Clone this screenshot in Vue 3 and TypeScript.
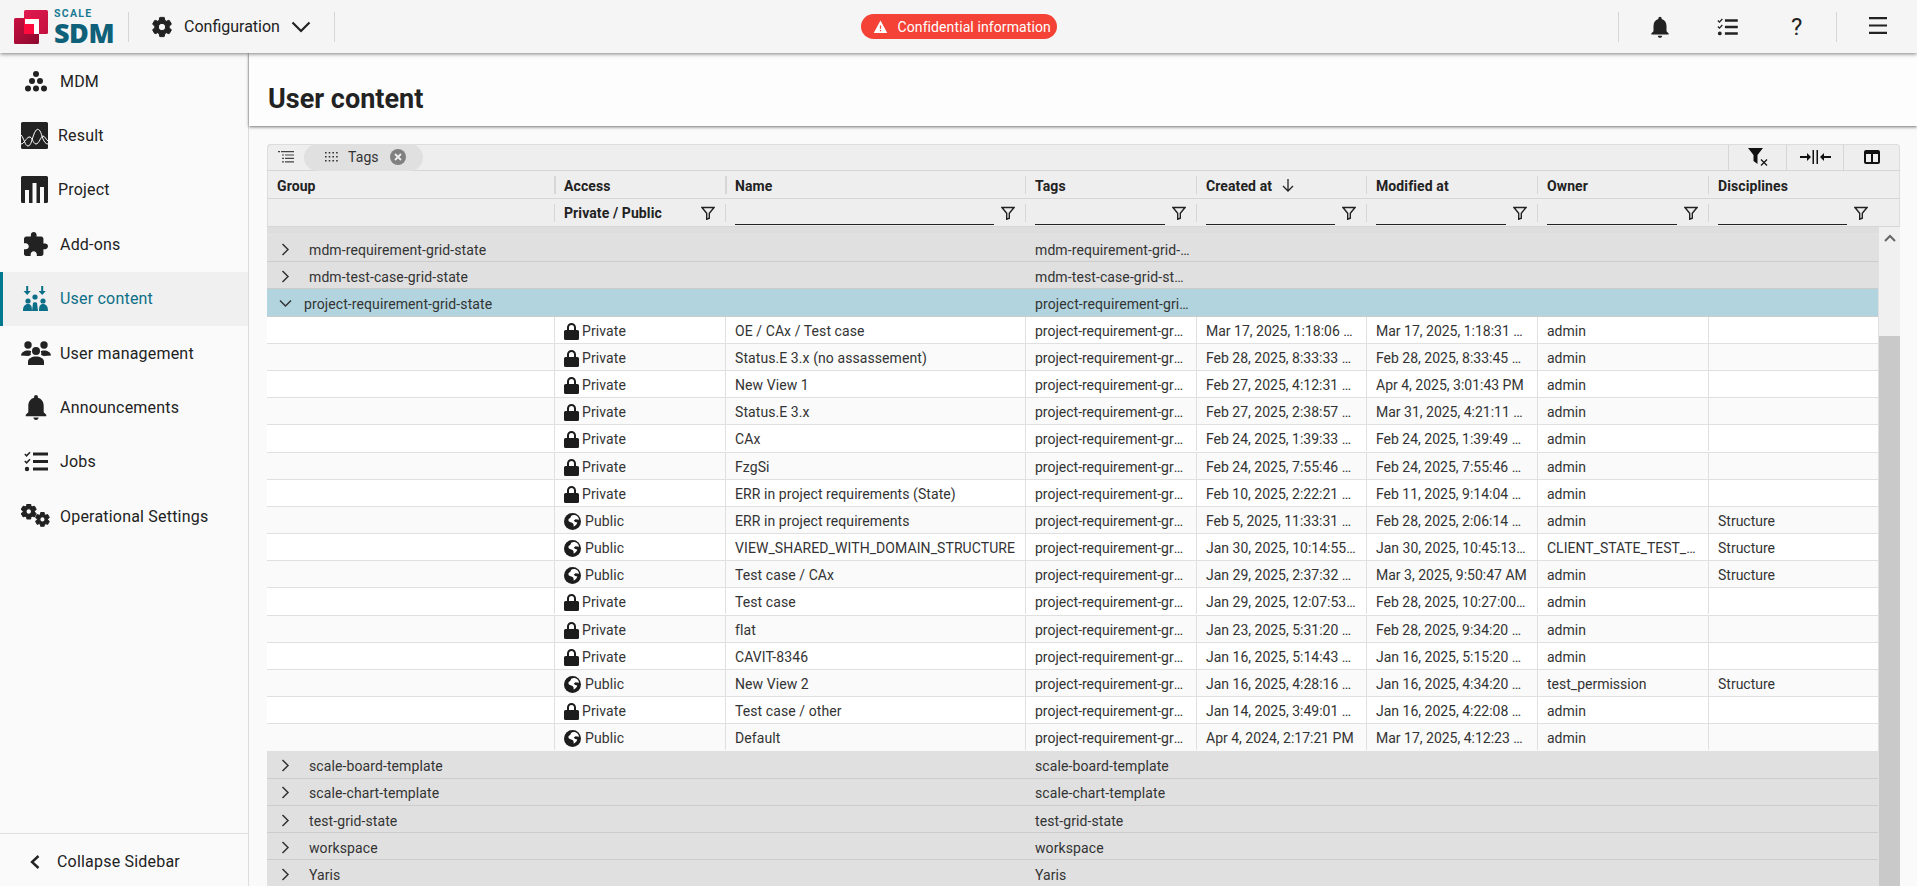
<script setup lang="ts">
interface Shape { d?: string; c?: number[]; fill?: string; stroke?: string; sw?: number; t?: string }
interface NavItem { label: string; vb: string; w: number; h: number; pad: number; slot: number; shapes: Shape[]; active?: boolean }
interface Row { acc: 'Private' | 'Public'; name: string; created: string; modified: string; owner: string; disc: string }

const gear = 'M19.14 12.94c.04-.3.06-.61.06-.94 0-.32-.02-.64-.07-.94l2.03-1.58c.18-.14.23-.41.12-.61l-1.92-3.32c-.12-.22-.37-.29-.59-.22l-2.39.96c-.5-.38-1.03-.7-1.62-.94l-.36-2.54c-.04-.24-.24-.41-.48-.41h-3.84c-.24 0-.43.17-.47.41l-.36 2.54c-.59.24-1.13.57-1.62.94l-2.39-.96c-.22-.08-.47 0-.59.22L2.74 8.87c-.12.21-.08.47.12.61l2.03 1.58c-.05.3-.09.63-.09.94s.02.64.07.94l-2.03 1.58c-.18.14-.23.41-.12.61l1.92 3.32c.12.22.37.29.59.22l2.39-.96c.5.38 1.03.7 1.62.94l.36 2.54c.05.24.24.41.48.41h3.84c.24 0 .44-.17.47-.41l.36-2.54c.59-.24 1.13-.56 1.62-.94l2.39.96c.22.08.47 0 .59-.22l1.92-3.32c.12-.22.07-.47-.12-.61l-2.01-1.58zM12 15.6c-1.98 0-3.6-1.62-3.6-3.6s1.62-3.6 3.6-3.6 3.6 1.62 3.6 3.6-1.62 3.6-3.6 3.6z'
const bell = 'M12 22c1.1 0 2-.9 2-2h-4c0 1.1.89 2 2 2zm6-6v-5c0-3.07-1.64-5.64-4.5-6.32V4c0-.83-.67-1.5-1.5-1.5s-1.5.67-1.5 1.5v.68C7.63 5.36 6 7.92 6 11v5l-2 2v1h16v-1l-2-2z'
const checklist: Shape[] = [
  { d: 'M.8 3l1.8 1.8L6 1.2', stroke: 'currentColor', sw: 1.5, fill: 'none' },
  { d: 'M.8 10l1.8 1.8L6 8.2', stroke: 'currentColor', sw: 1.5, fill: 'none' },
  { c: [3, 18, 2.2] },
  { d: 'M9 1.5h15v3H9zM9 9h15v3H9zM9 16.5h15v3H9z' },
]

const nav: NavItem[] = [
  { label: 'MDM', vb: '0 0 22 21', w: 22, h: 21, pad: 4, slot: 35, shapes: [
    { c: [11, 3, 3] }, { c: [7, 10, 3] }, { c: [15, 10, 3] }, { c: [3, 17.5, 3] }, { c: [11, 17.5, 3] }, { c: [19, 17.5, 3] },
  ] },
  { label: 'Result', vb: '0 0 27 27', w: 27, h: 27, pad: 0, slot: 37, shapes: [
    { d: 'M1.5 0h24A1.5 1.5 0 0 1 27 1.5v24a1.5 1.5 0 0 1-1.5 1.5h-24A1.5 1.5 0 0 1 0 25.5v-24A1.5 1.5 0 0 1 1.5 0z' },
    { d: 'M0 13c3 3 4 11 7 11s4-7 6-12 4-6 6-3 3 13 8 13', stroke: '#fff', sw: 1, fill: 'none' },
    { d: 'M0 22c3 0 5-6 8-7s4 7 7 7 5-8 7-8 3 4 5 5', stroke: '#fff', sw: 1, fill: 'none' },
  ] },
  { label: 'Project', vb: '0 0 27 27', w: 27, h: 27, pad: 0, slot: 37, shapes: [
    { d: 'M1.5 0h24A1.5 1.5 0 0 1 27 1.5v24a1.5 1.5 0 0 1-1.5 1.5h-24A1.5 1.5 0 0 1 0 25.5v-24A1.5 1.5 0 0 1 1.5 0zM4 14v13h4V14zM11.5 7v20h4V7zM19 11v16h4V11z' },
  ] },
  { label: 'Add-ons', vb: '2 1 21 21', w: 24, h: 24, pad: 3, slot: 36, shapes: [
    { d: 'M20.5 11H19V7c0-1.1-.9-2-2-2h-4V3.5C13 2.12 11.88 1 10.5 1S8 2.12 8 3.5V5H4c-1.1 0-1.99.9-1.99 2v3.8H3.5c1.49 0 2.7 1.21 2.7 2.7s-1.21 2.7-2.7 2.7H2V20c0 1.1.9 2 2 2h3.8v-1.5c0-1.49 1.21-2.7 2.7-2.7 1.49 0 2.7 1.21 2.7 2.7V22H17c1.1 0 2-.9 2-2v-4h1.5c1.38 0 2.5-1.12 2.5-2.5S21.88 11 20.5 11z' },
  ] },
  { label: 'User content', vb: '0 0 25 25', w: 25, h: 25, pad: 0, slot: 37, active: true, shapes: [
    { d: 'M3.2 0h2v5h2.6L4.2 9 .6 5h2.6zM18.2 0h2v5h2.6l-3.6 4-3.6-4h2.6z' },
    { c: [12, 11, 2.6] }, { c: [5, 15, 2.6] }, { c: [20, 15, 2.6] },
    { d: 'M9 25l1-8c.4-1 3.6-1 4 0l1 8zM0 25c0-5 2-7 5-7s4 2 4 7zM16 25c0-5 1-7 4-7s5 2 5 7z' },
  ] },
  { label: 'User management', vb: '0 0 30 24', w: 30, h: 24, pad: 0, slot: 39, shapes: [
    { c: [7, 4, 3.7] }, { c: [23, 4, 3.7] }, { c: [15, 10, 4] },
    { d: 'M0 14.5c0-3 3.5-5 7-5 1.6 0 2.6.3 3.3.8-.6 1-.8 2.2-.4 3.7-.9.2-1.8.5-2.5 1zM30 14.5c0-3-3.5-5-7-5-1.6 0-2.6.3-3.3.8.6 1 .8 2.2.4 3.7.9.2 1.8.5 2.5 1zM7 24v-3.5c0-3 4-5 8-5s8 2 8 5V24z' },
  ] },
  { label: 'Announcements', vb: '4 2.5 16 19.5', w: 22, h: 25, pad: 4, slot: 35, shapes: [{ d: bell }] },
  { label: 'Jobs', vb: '0 0 24 21', w: 24, h: 21, pad: 3, slot: 36, shapes: checklist },
  { label: 'Operational Settings', vb: '0 0 30 24', w: 30, h: 24, pad: 0, slot: 39, shapes: [
    { d: gear, t: 'translate(-1.6 -1.8) scale(.78)', stroke: 'currentColor', sw: 1.4 },
    { d: gear, t: 'translate(12.8 6.8) scale(.72)', stroke: 'currentColor', sw: 1.4 },
  ] },
]

const headers = ['Group', 'Access', 'Name', 'Tags', 'Created at', 'Modified at', 'Owner', 'Disciplines']
const tag = 'project-requirement-grid-state'
const rows: Row[] = [
  { acc: 'Private', name: 'OE / CAx / Test case', created: 'Mar 17, 2025, 1:18:06 PM', modified: 'Mar 17, 2025, 1:18:31 PM', owner: 'admin', disc: '' },
  { acc: 'Private', name: 'Status.E 3.x (no assassement)', created: 'Feb 28, 2025, 8:33:33 AM', modified: 'Feb 28, 2025, 8:33:45 AM', owner: 'admin', disc: '' },
  { acc: 'Private', name: 'New View 1', created: 'Feb 27, 2025, 4:12:31 PM', modified: 'Apr 4, 2025, 3:01:43 PM', owner: 'admin', disc: '' },
  { acc: 'Private', name: 'Status.E 3.x', created: 'Feb 27, 2025, 2:38:57 PM', modified: 'Mar 31, 2025, 4:21:11 PM', owner: 'admin', disc: '' },
  { acc: 'Private', name: 'CAx', created: 'Feb 24, 2025, 1:39:33 PM', modified: 'Feb 24, 2025, 1:39:49 PM', owner: 'admin', disc: '' },
  { acc: 'Private', name: 'FzgSi', created: 'Feb 24, 2025, 7:55:46 AM', modified: 'Feb 24, 2025, 7:55:46 AM', owner: 'admin', disc: '' },
  { acc: 'Private', name: 'ERR in project requirements (State)', created: 'Feb 10, 2025, 2:22:21 PM', modified: 'Feb 11, 2025, 9:14:04 AM', owner: 'admin', disc: '' },
  { acc: 'Public', name: 'ERR in project requirements', created: 'Feb 5, 2025, 11:33:31 AM', modified: 'Feb 28, 2025, 2:06:14 PM', owner: 'admin', disc: 'Structure' },
  { acc: 'Public', name: 'VIEW_SHARED_WITH_DOMAIN_STRUCTURE', created: 'Jan 30, 2025, 10:14:55 AM', modified: 'Jan 30, 2025, 10:45:13 AM', owner: 'CLIENT_STATE_TEST_USER', disc: 'Structure' },
  { acc: 'Public', name: 'Test case / CAx', created: 'Jan 29, 2025, 2:37:32 PM', modified: 'Mar 3, 2025, 9:50:47 AM', owner: 'admin', disc: 'Structure' },
  { acc: 'Private', name: 'Test case', created: 'Jan 29, 2025, 12:07:53 PM', modified: 'Feb 28, 2025, 10:27:00 AM', owner: 'admin', disc: '' },
  { acc: 'Private', name: 'flat', created: 'Jan 23, 2025, 5:31:20 PM', modified: 'Feb 28, 2025, 9:34:20 AM', owner: 'admin', disc: '' },
  { acc: 'Private', name: 'CAVIT-8346', created: 'Jan 16, 2025, 5:14:43 PM', modified: 'Jan 16, 2025, 5:15:20 PM', owner: 'admin', disc: '' },
  { acc: 'Public', name: 'New View 2', created: 'Jan 16, 2025, 4:28:16 PM', modified: 'Jan 16, 2025, 4:34:20 PM', owner: 'test_permission', disc: 'Structure' },
  { acc: 'Private', name: 'Test case / other', created: 'Jan 14, 2025, 3:49:01 PM', modified: 'Jan 16, 2025, 4:22:08 PM', owner: 'admin', disc: '' },
  { acc: 'Public', name: 'Default', created: 'Apr 4, 2024, 2:17:21 PM', modified: 'Mar 17, 2025, 4:12:23 PM', owner: 'admin', disc: '' },
]
const groupsBefore = ['mdm-requirement-grid-state', 'mdm-test-case-grid-state']
const groupsAfter = ['scale-board-template', 'scale-chart-template', 'test-grid-state', 'workspace', 'Yaris']
</script>

<template>
  <div class="app">
    <header class="top">
      <div class="logo">
        <svg class="logo-mark" width="34" height="34" viewBox="0 0 34 34">
          <defs>
            <linearGradient id="lr" x1="0" y1="0" x2="1" y2="1">
              <stop offset="0" stop-color="#e01a4f" />
              <stop offset="1" stop-color="#c2103f" />
            </linearGradient>
            <linearGradient id="ld" x1="0" y1="0" x2="1" y2="1">
              <stop offset="0" stop-color="#c81040" />
              <stop offset="1" stop-color="#8c0a2e" />
            </linearGradient>
          </defs>
          <rect x="10" y="0" width="24" height="24" rx="1.5" fill="url(#lr)" />
          <rect x="0" y="8" width="25" height="26" rx="1.5" fill="url(#ld)" />
          <rect x="10" y="8" width="15" height="16" fill="#ff0a3c" />
          <path d="M11 9h14v15h-5V14h-9z" fill="#fff" />
        </svg>
        <div class="logo-text">
          <span class="logo-scale">SCALE</span>
          <span class="logo-sdm">SDM</span>
        </div>
      </div>
      <span class="vline"></span>
      <div class="config">
        <svg width="24" height="24" viewBox="0 0 24 24" fill="#222" stroke="#222" stroke-width="1"><path :d="gear" /></svg>
        <span class="config-label">Configuration</span>
        <svg width="20" height="12" viewBox="0 0 20 12" fill="none" stroke="#222" stroke-width="2.2"><path d="M1.5 1.5l8.5 8.500 8.500-8.500" /></svg>
      </div>
      <span class="vline"></span>
      <div class="top-mid">
        <div class="badge">
          <svg width="15" height="13" viewBox="0 0 24 21" fill="#fff"><path d="M1 21h22L12 1 1 21zm12-3h-2v-2h2v2zm0-4h-2v-5h2v5z" /></svg>
          <span>Confidential information</span>
        </div>
      </div>
      <span class="vline"></span>
      <div class="top-icons">
        <svg width="26" height="26" viewBox="0 0 24 24" fill="#222"><path :d="bell" /></svg>
        <svg class="top-check" width="21" height="18" viewBox="0 0 24 21" fill="#222" color="#222">
          <template v-for="(s, i) in checklist" :key="i">
            <circle v-if="s.c" :cx="s.c[0]" :cy="s.c[1]" :r="s.c[2]" />
            <path v-else :d="s.d" :fill="s.fill" :stroke="s.stroke" :stroke-width="s.sw" />
          </template>
        </svg>
        <span class="help">?</span>
      </div>
      <span class="vline"></span>
      <div class="burger">
        <svg width="18" height="17" viewBox="0 0 18 17" fill="#222"><path d="M0 0h18v2.2H0zM0 7.4h18v2.2H0zM0 14.8h18V17H0z" /></svg>
      </div>
    </header>

    <div class="body">
      <aside class="side">
        <nav class="nav">
          <a v-for="n in nav" :key="n.label" class="nav-item" :class="{ active: n.active }">
            <span class="nav-icon" :style="{ width: n.slot + 'px', marginLeft: n.pad + 'px' }">
              <svg :width="n.w" :height="n.h" :viewBox="n.vb" fill="currentColor">
                <template v-for="(s, i) in n.shapes" :key="i">
                  <circle v-if="s.c" :cx="s.c[0]" :cy="s.c[1]" :r="s.c[2]" />
                  <path v-else :d="s.d" :fill="s.fill" :stroke="s.stroke" :stroke-width="s.sw" :transform="s.t" :fill-rule="n.label === 'Project' ? 'evenodd' : undefined" />
                </template>
              </svg>
            </span>
            <span>{{ n.label }}</span>
          </a>
        </nav>
        <div class="collapse">
          <svg width="12" height="16" viewBox="0 0 12 16" fill="none" stroke="#222" stroke-width="2.4"><path d="M9.5 2L3 8l6.500 6" /></svg>
          <span>Collapse Sidebar</span>
        </div>
      </aside>

      <main class="main">
        <div class="title-bar"><h1>User content</h1></div>
        <section class="grid">
          <div class="toolbar">
            <svg class="tb-tree" width="16" height="12" viewBox="0 0 16 12" fill="#444"><path d="M0 0h2v1.2H0zM3 0h13v1.2H3zM4 3.4h2v1.2H4zM7 3.4h9v1.2H7zM4 6.800h2V8H4zM7 6.800h9V8H7zM4 10.3h2v1.2H4zM7 10.3h9v1.2H7z" /></svg>
            <div class="chip">
              <svg width="13" height="10" viewBox="0 0 13 10" fill="#333"><path d="M0 0h1.6v1.6H0zM3.7 0h1.6v1.6H3.7zM7.4 0H9v1.6H7.4zM11.1 0h1.6v1.6h-1.6zM0 4h1.6v1.6H0zM3.7 4h1.6v1.6H3.7zM7.4 4H9v1.6H7.4zM11.1 4h1.6v1.6h-1.6zM0 8h1.6v1.6H0zM3.7 8h1.6v1.6H3.7zM7.4 8H9v1.6H7.4zM11.1 8h1.6v1.6h-1.6z" /></svg>
              <span class="chip-label">Tags</span>
              <svg width="16" height="16" viewBox="0 0 16 16"><circle cx="8" cy="8" r="8" fill="#808080" /><path d="M5 5l6 6M11 5l-6 6" stroke="#eee" stroke-width="1.8" /></svg>
            </div>
            <div class="tb-right">
              <span class="tb-btn">
                <svg width="20" height="18" viewBox="0 0 20 18"><path d="M0 0h15L9.5 7v9l-4-3V7z" fill="#111" /><path d="M13 11.5l6 6M19 11.5l-6 6" stroke="#111" stroke-width="1.2" /></svg>
              </span>
              <span class="tb-btn">
                <svg width="31" height="14" viewBox="0 0 31 14" fill="#111"><path d="M0 6h7V3l4 4-4 4V8H0zM12.5 0H14v14h-1.5zM16.5 0H18v14h-1.5zM31 6h-7V3l-4 4 4 4V8h7z" /></svg>
              </span>
              <span class="tb-btn">
                <svg width="16" height="14" viewBox="0 0 16 14" fill="none" stroke="#111" stroke-width="2"><rect x="1" y="1" width="14" height="12" rx="1" /><path d="M8 1v12M1 3h14" /></svg>
              </span>
            </div>
          </div>

          <div class="head cols">
            <div v-for="(h, i) in headers" :key="h" class="hcell" :class="{ first: i === 0, thick: i < 3 }">
              <span>{{ h }}</span>
              <svg v-if="h === 'Created at'" class="sort" width="12" height="13" viewBox="0 0 12 13" fill="none" stroke="#222" stroke-width="1.3"><path d="M6 0v12M1 7l5 5 5-5" /></svg>
            </div>
          </div>

          <div class="filters cols">
            <div class="fcell first"></div>
            <div class="fcell">
              <b class="priv">Private / Public</b>
              <svg class="funnel" width="14" height="14" viewBox="0 0 14 14" fill="none" stroke="#222" stroke-width="1.4"><path d="M1 1.5h12L8.3 7.2v5L5.7 13.2V7.2z" /></svg>
            </div>
            <div v-for="h in headers.slice(2)" :key="h" class="fcell">
              <span class="finput"></span>
              <svg class="funnel" width="14" height="14" viewBox="0 0 14 14" fill="none" stroke="#222" stroke-width="1.4"><path d="M1 1.5h12L8.3 7.2v5L5.7 13.2V7.2z" /></svg>
            </div>
          </div>

          <div class="scroller">
            <div class="rows">
              <div class="band"></div>
              <div v-for="g in groupsBefore" :key="g" class="grow cols">
                <div class="gname">
                  <svg class="chev" width="9" height="13" viewBox="0 0 9 13" fill="none" stroke="#333" stroke-width="1.5"><path d="M1.5 1L7 6.5 1.5 12" /></svg>
                  <span class="gtext">{{ g }}</span>
                </div>
                <div class="gtag">{{ g }}</div>
              </div>
              <div class="grow sel cols">
                <div class="gname">
                  <svg class="chev-down" width="13" height="9" viewBox="0 0 13 9" fill="none" stroke="#333" stroke-width="1.5"><path d="M1 1.5L6.5 7 12 1.5" /></svg>
                  <span class="gtext">{{ tag }}</span>
                </div>
                <div class="gtag">{{ tag }}</div>
              </div>
              <div v-for="r in rows" :key="r.name + r.created" class="drow cols">
                <div class="dcell"></div>
                <div class="dcell acc">
                  <svg v-if="r.acc === 'Private'" width="15" height="17" viewBox="0 0 15 17" fill="#1c1c1c"><path d="M1.5 7H3V4.5a4.5 4.5 0 0 1 9 0V7h1.5A1.5 1.5 0 0 1 15 8.5v7a1.5 1.5 0 0 1-1.5 1.5h-12A1.5 1.5 0 0 1 0 15.5v-7A1.5 1.5 0 0 1 1.5 7zM5 7h5V4.5a2.5 2.5 0 0 0-5 0z" /></svg>
                  <svg v-else class="globe" width="17" height="17" viewBox="0 0 17 17"><circle cx="8.5" cy="8.5" r="8.5" fill="#1c1c1c" /><path d="M7 3c2-1.5 5-1.2 6.8.8.8 1 1.200 2 1.200 3l-3.500-.5-1.800 1.400 1.600 1.200 2 .6c-.5 2-2 3.500-3.800 4 .6-2-.2-3.500-2.200-4S4 8 4.500 6.500 6.500 6 7 3z" fill="#fff" /></svg>
                  <span>{{ r.acc }}</span>
                </div>
                <div class="dcell txt">{{ r.name }}</div>
                <div class="dcell txt">{{ tag }}</div>
                <div class="dcell txt">{{ r.created }}</div>
                <div class="dcell txt">{{ r.modified }}</div>
                <div class="dcell txt">{{ r.owner }}</div>
                <div class="dcell txt">{{ r.disc }}</div>
              </div>
              <div v-for="g in groupsAfter" :key="g" class="grow cols">
                <div class="gname">
                  <svg class="chev" width="9" height="13" viewBox="0 0 9 13" fill="none" stroke="#333" stroke-width="1.5"><path d="M1.5 1L7 6.5 1.5 12" /></svg>
                  <span class="gtext">{{ g }}</span>
                </div>
                <div class="gtag">{{ g }}</div>
              </div>
            </div>
            <div class="sbar">
              <div class="sbar-up">
                <svg width="12" height="8" viewBox="0 0 12 8" fill="none" stroke="#666" stroke-width="2"><path d="M1 7l5-5 5 5" /></svg>
              </div>
              <div class="sbar-thumb"></div>
            </div>
          </div>
        </section>
      </main>
    </div>
  </div>
</template>

<style>
html, body { margin: 0; background: #fafafa; overflow: hidden; }
</style>

<style scoped>
.app { width: 1917px; height: 886px; display: flex; flex-direction: column; overflow: hidden; font-family: Roboto, "Liberation Sans", sans-serif; color: #222; font-size: 14px; letter-spacing: .1px; }
.top { height: 53px; flex: none; display: flex; align-items: center; background: #f5f5f5; box-shadow: 0 1px 4px rgba(0,0,0,.5); position: relative; z-index: 3; }
.logo { width: 128px; padding-left: 14px; box-sizing: border-box; display: flex; gap: 6px; align-items: center; }
.logo-text { display: flex; flex-direction: column; color: #0f6079; line-height: 1; }
.logo-scale { font-size: 10.5px; font-weight: 700; letter-spacing: 1.3px; color: #1a7a94; height: 12px; }
.logo-sdm { font-family: "Open Sans", sans-serif; font-size: 27px; font-weight: 800; height: 24px; line-height: 23px; letter-spacing: -.5px; }
.vline { width: 1px; height: 30px; background: #d6d6d6; flex: none; }
.config { width: 205px; box-sizing: border-box; padding-left: 21px; display: flex; align-items: center; }
.config-label { margin: 0 11px 0 10px; font-size: 16px; letter-spacing: 0; }
.top-mid { flex: 1; display: flex; justify-content: center; }
.badge { width: 196px; height: 25px; margin-left: -36px; box-sizing: border-box; background: #f44336; color: #fff; border-radius: 13px; display: flex; align-items: center; padding-left: 12px; gap: 10px; font-size: 14px; }
.top-icons { width: 217px; display: flex; align-items: center; padding-left: 28px; box-sizing: border-box; }
.top-check { margin-left: 44px; }
.help { font-size: 24px; font-weight: 400; line-height: 24px; margin-left: 53px; color: #222; }
.burger { width: 80px; flex: none; display: flex; justify-content: center; padding: 0 0 3px 2px; box-sizing: border-box; }
.body { flex: 1; display: flex; min-height: 0; }
.side { width: 249px; flex: none; box-sizing: border-box; border-right: 1px solid #ddd; background: #fafafa; display: flex; flex-direction: column; }
.nav { flex: 1; padding-top: 1px; }
.nav-item { height: 54.4px; display: flex; align-items: center; padding-left: 21px; font-size: 16px; box-sizing: border-box; color: #222; letter-spacing: .2px; }
.nav-item.active { background: #f0f0f0; border-left: 3px solid #00788f; padding-left: 20px; color: #0c6f88; }
.nav-icon { display: flex; align-items: center; flex: none; }
.collapse { height: 53px; border-top: 1px solid #e0e0e0; box-sizing: border-box; display: flex; align-items: center; padding: 3px 0 0 29px; gap: 16px; font-size: 16px; letter-spacing: .2px; }
.main { flex: 1; min-width: 0; background: #fafafa; display: flex; flex-direction: column; }
.title-bar { height: 73px; flex: none; box-sizing: border-box; background: #fdfdfd; box-shadow: 0 1px 3px rgba(0,0,0,.55); display: flex; align-items: center; padding: 18px 0 0 19px; position: relative; z-index: 1; }
h1 { margin: 0; font-size: 27px; font-weight: 700; color: #222; letter-spacing: 0; }
.grid { margin: 18px 17px 0 18px; flex: 1; min-height: 0; display: flex; flex-direction: column; background: #eee; border-radius: 4px 4px 0 0; box-shadow: inset 1px 1px 0 #ddd, inset -1px 0 0 #ddd; overflow: hidden; }
.cols { display: grid; grid-template-columns: 287px 171px 300px 171px 170px 171px 171px 170px; }
.toolbar { height: 27px; flex: none; box-sizing: border-box; border-bottom: 1px solid #d6d6d6; display: flex; align-items: center; padding-left: 11px; }
.chip { margin-left: 10px; width: 119px; height: 27px; box-sizing: border-box; background: #e0e0e0; border-radius: 14px; display: flex; align-items: center; padding-left: 21px; }
.chip-label { margin: 0 16px 0 10px; color: #333; width: 26px; }
.tb-right { margin-left: auto; display: flex; height: 25px; }
.tb-btn { border-left: 1px solid #d6d6d6; display: flex; align-items: center; justify-content: center; }
.tb-btn:nth-child(1) { width: 57px; }
.tb-btn:nth-child(2) { width: 56px; }
.tb-btn:nth-child(3) { width: 56px; }
.head { height: 28px; flex: none; box-sizing: border-box; border-bottom: 1px solid #d6d6d6; align-items: center; }
.hcell { height: 18px; box-sizing: border-box; border-left: 1px solid #d6d6d6; padding: 2px 0 0 9px; font-weight: 700; display: flex; align-items: center; font-size: 14px; color: #222; }
.hcell.thick { border-left-width: 2px; padding-left: 8px; }
.hcell.first { border-left: 0; padding-left: 10px; }
.sort { margin-left: 10px; }
.filters { height: 28px; flex: none; box-sizing: border-box; border-bottom: 1px solid #d6d6d6; align-items: center; }
.fcell { height: 18px; box-sizing: border-box; border-left: 1px solid #d6d6d6; padding-left: 9px; display: flex; align-items: center; position: relative; }
.fcell.first { border-left: 0; }
.priv { font-weight: 700; }
.finput { flex: 1; height: 18px; box-sizing: border-box; border-bottom: 1px solid #222; margin: 6px 31px 0 0; }
.funnel { position: absolute; right: 10px; top: 2px; }
.scroller { flex: 1; min-height: 0; display: flex; overflow: hidden; }
.rows { width: 1611px; flex: none; overflow: hidden; }
.band { height: 8px; background: #dedede; border-bottom: 1px solid #e4e4e4; box-sizing: border-box; }
.grow { height: 27.2px; box-sizing: border-box; background: #e0e0e0; border-bottom: 1px solid #ccc; align-items: center; color: #333; }
.grow.sel { background: #b2d4de; }
.gname { grid-column: 1 / 4; display: flex; align-items: center; padding-left: 14px; }
.gtext { padding-top: 3px; }
.chev { margin: 2px 19px 0 0; }
.chev-down { margin: 2px 12px 0 -2px; }
.gtag { padding: 3px 6px 0 10px; white-space: nowrap; overflow: hidden; text-overflow: ellipsis; }
.drow { height: 27.2px; box-sizing: border-box; border-bottom: 1px solid #e0e0e0; background: #fff; color: #333; letter-spacing: 0; }
.drow:nth-child(even) { background: #fafafa; }
.dcell { border-left: 1px solid #e0e0e0; height: 26px; line-height: 24px; padding-top: 2px; box-sizing: border-box; }
.dcell:first-child { border-left: 0; }
.txt { padding-left: 9px; padding-right: 10px; white-space: nowrap; overflow: hidden; text-overflow: ellipsis; }
.txt:nth-child(3) { letter-spacing: .08px; padding-right: 4px; }
.acc { display: flex; align-items: center; padding-left: 9px; gap: 3px; letter-spacing: .1px; }
.acc svg { flex: none; margin-top: 1px; }
.globe { margin-right: 1px; }
.sbar { flex: 1; background: #f0f0f0; display: flex; flex-direction: column; border-left: 1px solid #e0e0e0; }
.sbar-up { height: 109px; flex: none; display: flex; justify-content: center; padding-top: 7px; box-sizing: border-box; }
.sbar-thumb { flex: 1; background: #c9c9c9; }
</style>
